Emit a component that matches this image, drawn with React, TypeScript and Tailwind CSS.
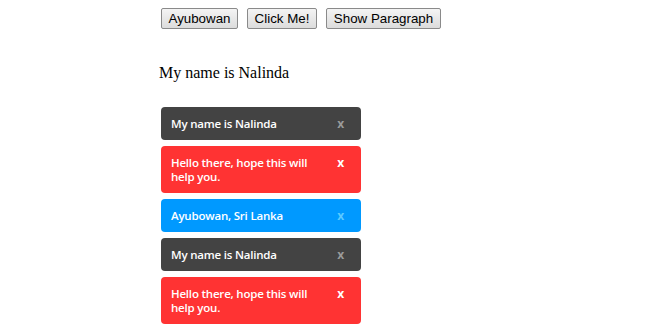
import React from "react";

const toasts = [
  { text: "My name is Nalinda", bg: "bg-[#434343]", x: "text-[#9a9a9a]" },
  { text: "Hello there, hope this will help you.", bg: "bg-[#ff3333]", x: "text-white" },
  { text: "Ayubowan, Sri Lanka", bg: "bg-[#0099ff]", x: "text-[#5ccaff]" },
  { text: "My name is Nalinda", bg: "bg-[#434343]", x: "text-[#9a9a9a]" },
  { text: "Hello there, hope this will help you.", bg: "bg-[#ff3333]", x: "text-white" },
];

function Btn({ label, w }: { label: string; w: string }) {
  return (
    <button
      className={`h-[21px] ${w} border border-[#8a8a8a] rounded-[2px] bg-gradient-to-b from-[#f4f4f4] to-[#dcdcdc] text-[13.33px] text-black leading-none flex items-center justify-center`}
      style={{ fontFamily: '"Liberation Sans", Arial, sans-serif' }}
    >
      {label}
    </button>
  );
}

export default function App() {
  return (
    <div className="w-[660px] h-[330px] bg-white overflow-hidden">
      <div className="pl-[161px] pt-[8px] flex gap-[9px]">
        <Btn label="Ayubowan" w="w-[77px]" />
        <Btn label="Click Me!" w="w-[70px]" />
        <Btn label="Show Paragraph" w="w-[115px]" />
      </div>
      <p
        className="ml-[159px] mt-[35px] text-[16px] leading-[18px] text-black"
        style={{ fontFamily: '"Liberation Serif", "Times New Roman", serif' }}
      >
        My name is Nalinda
      </p>
      <div className="ml-[161px] mt-[25px] flex flex-col gap-[6px] w-[200px]">
        {toasts.map((t, i) => (
          <div
            key={i}
            className={`${t.bg} rounded-[4px] pt-[10px] pb-[9px] pl-[10px] pr-[16px] flex justify-between items-start text-white text-[11.5px] leading-[14px] tracking-[-0.2px]`}
            style={{ fontFamily: '"Open Sans", "Noto Sans", sans-serif' }}
          >
            <span className="block w-[150px] h-auto font-semibold leading-[14px]">{t.text}</span>
            <span className={`${t.x} block font-bold text-[12px] leading-[14px] mr-[1px]`}>x</span>
          </div>
        ))}
      </div>
    </div>
  );
}
